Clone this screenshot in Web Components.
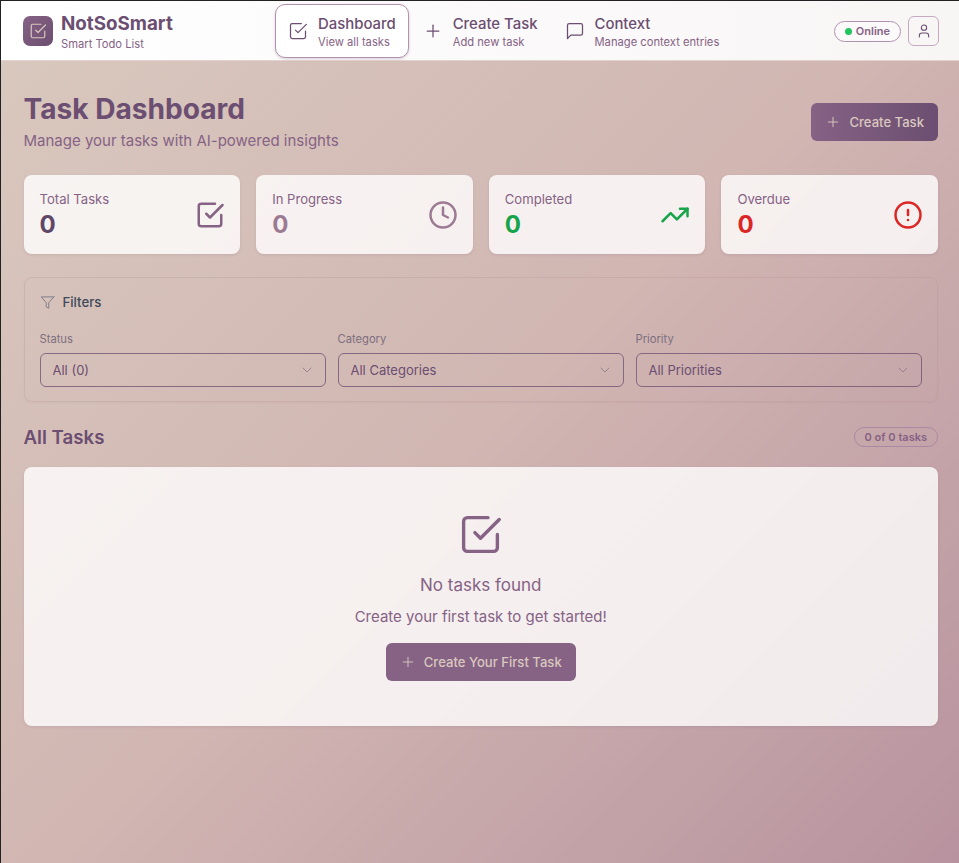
<!DOCTYPE html>
<html lang="en"><head><meta charset="utf-8"><title>NotSoSmart</title>
<style>
html,body{margin:0;padding:0;height:100%}
body{font-family:Inter,"Liberation Sans",sans-serif;background:#fff}
</style></head><body>
<app-shell>
  <app-header></app-header>
  <main-page>
    <page-head></page-head>
    <div slot="stats">
      <stat-card label="Total Tasks" color="#5f4768" icolor="#866285" icon="check"></stat-card>
      <stat-card label="In Progress" color="#9d7a94" icolor="#9d7a94" icon="clock"></stat-card>
      <stat-card label="Completed" color="#16a34a" icolor="#16a34a" icon="trend"></stat-card>
      <stat-card label="Overdue" color="#dc2626" icolor="#dc2626" icon="alert"></stat-card>
    </div>
    <filter-panel slot="filters"></filter-panel>
    <task-section slot="tasks"></task-section>
  </main-page>
</app-shell>
<script>
const I={
check:'<path d="M9 11l3 3L22 4"/><path d="M21 12v7a2 2 0 0 1-2 2H5a2 2 0 0 1-2-2V5a2 2 0 0 1 2-2h11"/>',
plus:'<path d="M5 12h14"/><path d="M12 5v14"/>',
chat:'<path d="M21 15a2 2 0 0 1-2 2H7l-4 4V5a2 2 0 0 1 2-2h14a2 2 0 0 1 2 2z"/>',
user:'<path d="M19 21v-2a4 4 0 0 0-4-4H9a4 4 0 0 0-4 4v2"/><circle cx="12" cy="7" r="4"/>',
clock:'<circle cx="12" cy="12" r="10"/><polyline points="12 6 12 12 16 14"/>',
trend:'<polyline points="22 7 13.5 15.5 8.5 10.5 2 17"/><polyline points="16 7 22 7 22 13"/>',
alert:'<circle cx="12" cy="12" r="10"/><line x1="12" y1="8" x2="12" y2="12"/><line x1="12" y1="16" x2="12.01" y2="16"/>',
filter:'<polygon points="22 3 2 3 10 12.46 10 19 14 21 14 12.46 22 3"/>',
chev:'<path d="M6 9l6 6 6-6"/>'};
const svg=(n,s,c,w=2)=>`<svg xmlns="http://www.w3.org/2000/svg" width="${s}" height="${s}" viewBox="0 0 24 24" fill="none" stroke="${c}" stroke-width="${w}" stroke-linecap="round" stroke-linejoin="round" style="display:block;flex:none">${I[n]}</svg>`;
class Base extends HTMLElement{
  render(h){this.attachShadow({mode:'open'}).innerHTML=h}
}
customElements.define('app-shell',class extends Base{connectedCallback(){this.render(`<style>
:host{display:flex;flex-direction:column;height:863px;box-sizing:border-box;border-top:1px solid #222;border-left:1px solid #222;overflow:hidden;background:linear-gradient(135deg,#d9c9bf 0%,#d1b6b2 50%,#b8939f 100%)}
</style><slot></slot>`)}});
customElements.define('nav-item',class extends Base{connectedCallback(){const a=this.hasAttribute('active');this.render(`<style>
:host{display:flex;align-items:center;gap:10px;box-sizing:border-box;height:54px;padding:0 12px;border-radius:10px;border:1px solid ${a?'#b192ae':'transparent'};background:${a?'#fff':'transparent'};${a?'box-shadow:0 1px 3px rgba(107,78,113,.25);':''}}
.w{padding-top:2px}
.t{font-size:14.9px;line-height:20px;font-weight:500;color:#6b4e71}
.s{font-size:11.2px;line-height:16px;color:#866285}
</style>${svg(this.getAttribute('icon'),20,'#6b4e71',1.5)}<div class="w"><div class="t">${this.getAttribute('t')}</div><div class="s">${this.getAttribute('s')}</div></div>`)}});
customElements.define('app-header',class extends Base{connectedCallback(){this.render(`<style>
:host{display:flex;align-items:center;box-sizing:border-box;height:60px;flex:none;padding:0 20px 0 22px;background:linear-gradient(90deg,#fff,#f8f5f5);box-shadow:inset 0 -1px 0 #e3d3d0}
.logo{width:30px;height:30px;border-radius:7px;background:linear-gradient(135deg,#866285,#6b4e71);display:flex;align-items:center;justify-content:center;flex:none}
.brand{display:flex;gap:8px;align-items:center;width:252px;flex:none}
.x{padding-top:1px}
.n{font-size:18.8px;line-height:24px;font-weight:700;color:#6b4e71}
.st{font-size:11.2px;line-height:14px;color:#866285;margin-top:1px}
nav{display:flex;align-items:center;gap:1px}
.r{margin-left:auto;display:flex;align-items:center;gap:7px}
.p{display:flex;align-items:center;gap:4px;box-sizing:border-box;height:21px;padding:0 10px;border:1px solid #b192ae;border-radius:11px;font-size:11px;font-weight:600;color:#866285;background:#fbf9f9}
.d{width:7px;height:7px;border-radius:50%;background:#22c55e}
.u{width:31px;height:30px;box-sizing:border-box;border:1px solid #c5a9c0;border-radius:6px;display:flex;align-items:center;justify-content:center}
</style>
<div class="brand"><div class="logo">${svg('check',18,'#d9c8be',1.6)}</div><div class="x"><div class="n">NotSoSmart</div><div class="st">Smart Todo List</div></div></div>
<nav><nav-item active icon="check" t="Dashboard" s="View all tasks"></nav-item><nav-item icon="plus" t="Create Task" s="Add new task"></nav-item><nav-item icon="chat" t="Context" s="Manage context entries"></nav-item></nav>
<div class="r"><div class="p"><span class="d"></span>Online</div><div class="u">${svg('user',16,'#6b4e71',1.6)}</div></div>`)}});
customElements.define('main-page',class extends Base{connectedCallback(){this.render(`<style>
:host{display:flex;flex-direction:column;padding:32px 21px 0 22.5px}
::slotted([slot=stats]){display:grid;grid-template-columns:repeat(4,1fr);gap:16px;margin-top:22px}
::slotted([slot=filters]){margin-top:23px}
::slotted([slot=tasks]){margin-top:23px}
</style><slot></slot><slot name="stats"></slot><slot name="filters"></slot><slot name="tasks"></slot>`)}});
customElements.define('app-button',class extends Base{connectedCallback(){this.render(`<style>
:host{display:inline-flex;align-items:center;gap:8px;box-sizing:border-box;height:37.5px;padding:0 14px;border-radius:6px;font-size:13.1px;font-weight:500;color:#d9c8be;background:${this.getAttribute('bg')}}
</style>${svg('plus',16,'#d9c8be',1.4)}<span><slot></slot></span>`)}});
customElements.define('page-head',class extends Base{connectedCallback(){this.render(`<style>
:host{display:flex;justify-content:space-between;align-items:flex-start}
h1{margin:0;font-size:28.1px;line-height:32px;font-weight:700;color:#6b4e71}
p{margin:4px 0 0;font-size:15px;line-height:24px;color:#866285}
app-button{margin-top:10px}
</style><div><h1>Task Dashboard</h1><p>Manage your tasks with AI-powered insights</p></div>
<app-button bg="linear-gradient(90deg,#866285,#6b4e71)">Create Task</app-button>`)}});
customElements.define('stat-card',class extends Base{connectedCallback(){const c=this.getAttribute('color'),ic=this.getAttribute('icolor');this.render(`<style>
:host{display:flex;align-items:center;justify-content:space-between;box-sizing:border-box;height:79px;padding:0 15px 0 16px;background:rgba(255,255,255,.8);border-radius:8px;box-shadow:0 1px 3px rgba(107,78,113,.15)}
.l{font-size:13.1px;line-height:18px;color:#866285}
.v{font-size:24px;line-height:30px;font-weight:700;color:${c};margin-top:2px}
.w{margin-top:0}
</style><div class="w"><div class="l">${this.getAttribute('label')}</div><div class="v">0</div></div>${svg(this.getAttribute('icon'),30,ic,2)}`)}});
customElements.define('select-box',class extends Base{connectedCallback(){this.render(`<style>
:host{display:flex;flex-direction:column;min-width:0}
label{font-size:11.2px;line-height:16px;color:#7c6f80;margin-bottom:6px}
.b{display:flex;align-items:center;justify-content:space-between;box-sizing:border-box;height:34px;padding:0 10px 0 12px;border:1px solid rgba(107,78,113,.75);border-radius:6px;font-size:13px;color:#6b4e71}
</style><label>${this.getAttribute('label')}</label><div class="b"><span>${this.getAttribute('value')}</span>${svg('chev',16,'#8f7a90',1.3)}</div>`)}});
customElements.define('filter-panel',class extends Base{connectedCallback(){this.render(`<style>
:host{display:block;box-sizing:border-box;height:125px;padding:14px 15px;border:1px solid rgba(190,150,150,.35);border-radius:8px;box-shadow:0 1px 2px rgba(107,78,113,.05)}
.h{display:flex;align-items:center;gap:8px;font-size:13.2px;font-weight:500;line-height:20px;color:#3f4a5a;margin-bottom:19px}
.g{display:grid;grid-template-columns:repeat(3,1fr);gap:11.5px}
</style><div class="h">${svg('filter',15,'#6f6f80',1.3)}Filters</div>
<div class="g"><select-box label="Status" value="All (0)"></select-box><select-box label="Category" value="All Categories"></select-box><select-box label="Priority" value="All Priorities"></select-box></div>`)}});
customElements.define('task-section',class extends Base{connectedCallback(){this.render(`<style>
:host{display:block}
.h{display:flex;justify-content:space-between;align-items:center;height:24px}
h2{margin:0;font-size:18.7px;font-weight:600;color:#6b4e71}
.b{box-sizing:border-box;height:20px;padding:0 10px;border:1px solid #a98aa4;border-radius:10px;font-size:11px;line-height:18px;font-weight:600;color:#866285}
.e{margin-top:18px;box-sizing:border-box;height:259px;background:rgba(255,255,255,.8);border-radius:8px;box-shadow:0 1px 3px rgba(107,78,113,.15);display:flex;flex-direction:column;align-items:center;padding-top:45px}
.t{margin-top:16px;font-size:17px;line-height:24px;color:#866285}
.s{margin-top:8px;font-size:15px;line-height:24px;color:#866285}
app-button{margin-top:14px}
</style><div class="h"><h2>All Tasks</h2><span class="b">0 of 0 tasks</span></div>
<div class="e">${svg('check',45,'#866285',1.8)}<div class="t">No tasks found</div><div class="s">Create your first task to get started!</div><app-button bg="#866285">Create Your First Task</app-button></div>`)}});
</script></body></html>
